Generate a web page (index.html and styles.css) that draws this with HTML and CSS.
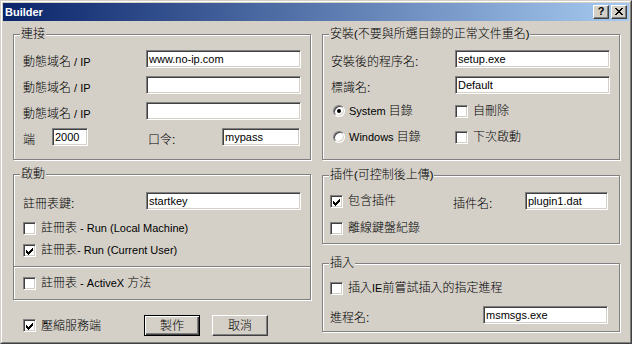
FILE: index.html
```html
<!DOCTYPE html>
<html lang="zh-Hant">
<head>
<meta charset="utf-8">
<title>Builder</title>
<link rel="stylesheet" href="styles.css">
</head>
<body>
<div class="window">
  <div class="frame">
    <div class="titlebar">
      <span class="title-text">Builder</span>
      <div class="cbtns">
        <span class="cbtn"><span class="qmark">?</span></span>
        <span class="cbtn">
          <svg width="8" height="7" viewBox="0 0 8 7" shape-rendering="crispEdges"><path d="M0 0h2v1H0z M6 0h2v1H6z M1 1h2v1H1z M5 1h2v1H5z M2 2h4v1H2z M3 3h2v1H3z M2 4h4v1H2z M1 5h2v1H1z M5 5h2v1H5z M0 6h2v1H0z M6 6h2v1H6z" fill="#000"/></svg>
        </span>
      </div>
    </div>
    <div class="client">
      <div class="col">
        <div class="group h126">
          <span class="legend">連接</span>
          <div class="fgrid g-connect">
            <span class="lbl">動態域名<span class="l"> / IP</span></span>
            <div class="edit">www.no-ip.com</div>
            <span class="lbl">動態域名<span class="l"> / IP</span></span>
            <div class="edit"></div>
            <span class="lbl">動態域名<span class="l"> / IP</span></span>
            <div class="edit"></div>
            <div class="row4">
              <span class="lbl lbl-port">端</span>
              <div class="edit e-port">2000</div>
              <span class="lbl lbl-pass">口令:</span>
              <div class="edit e-pass">mypass</div>
            </div>
          </div>
        </div>

        <div class="group h126 mt14">
          <span class="legend">啟動</span>
          <div class="sec-top">
            <div class="fgrid g-start">
              <span class="lbl">註冊表鍵:</span>
              <div class="edit">startkey</div>
            </div>
            <div class="opt mt11">
              <span class="cb"></span>
              <span>註冊表<span class="l"> - Run (Local Machine)</span></span>
            </div>
            <div class="opt mt8">
              <span class="cb"><svg width="11" height="11" viewBox="-1 -1 11 11" shape-rendering="crispEdges"><path d="M1 4h1v3H1z M2 5h1v3H2z M3 6h1v3H3z M4 5h1v3H4z M5 4h1v3H5z M6 3h1v3H6z M7 2h1v3H7z" fill="#000"/></svg></span>
              <span>註冊表<span class="l">- Run (Current User)</span></span>
            </div>
          </div>
          <div class="sep"></div>
          <div class="sec-bottom">
            <div class="opt">
              <span class="cb"></span>
              <span>註冊表<span class="l"> - ActiveX </span>方法</span>
            </div>
          </div>
        </div>

        <div class="bottom">
          <div class="opt compress">
            <span class="cb"><svg width="11" height="11" viewBox="-1 -1 11 11" shape-rendering="crispEdges"><path d="M1 4h1v3H1z M2 5h1v3H2z M3 6h1v3H3z M4 5h1v3H4z M5 4h1v3H5z M6 3h1v3H6z M7 2h1v3H7z" fill="#000"/></svg></span>
            <span>壓縮服務端</span>
          </div>
          <div class="btn default">製作</div>
          <div class="btn">取消</div>
        </div>
      </div>

      <div class="col">
        <div class="group h126">
          <span class="legend">安裝<span class="l">(</span>不要與所選目錄的正常文件重名<span class="l">)</span></span>
          <div class="fgrid g-install">
            <span class="lbl">安裝後的程序名:</span>
            <div class="edit">setup.exe</div>
            <span class="lbl">標識名:</span>
            <div class="edit">Default</div>
            <div class="opt tall r">
              <span class="radio on"></span>
              <span><span class="l">System </span>目錄</span>
            </div>
            <div class="opt tall">
              <span class="cb"></span>
              <span>自刪除</span>
            </div>
            <div class="opt tall r">
              <span class="radio"></span>
              <span><span class="l">Windows </span>目錄</span>
            </div>
            <div class="opt tall">
              <span class="cb"></span>
              <span>下次啟動</span>
            </div>
          </div>
        </div>

        <div class="group h69 mt15">
          <span class="legend">插件<span class="l">(</span>可控制後上傳<span class="l">)</span></span>
          <div class="inner g-plugin">
            <div class="prow">
              <div class="opt w-plug">
                <span class="cb"><svg width="11" height="11" viewBox="-1 -1 11 11" shape-rendering="crispEdges"><path d="M1 4h1v3H1z M2 5h1v3H2z M3 6h1v3H3z M4 5h1v3H4z M5 4h1v3H5z M6 3h1v3H6z M7 2h1v3H7z" fill="#000"/></svg></span>
                <span>包含插件</span>
              </div>
              <span class="lbl lbl-pn">插件名:</span>
              <div class="edit e-pn">plugin1.dat</div>
            </div>
            <div class="opt mt11">
              <span class="cb"></span>
              <span>離線鍵盤紀錄</span>
            </div>
          </div>
        </div>

        <div class="group h69 mt19">
          <span class="legend">插入</span>
          <div class="inner g-inject">
            <div class="opt">
              <span class="cb"></span>
              <span>插入<span class="l">IE</span>前嘗試插入的指定進程</span>
            </div>
            <div class="prow mt11">
              <span class="lbl lbl-proc">進程名:</span>
              <div class="edit e-proc">msmsgs.exe</div>
            </div>
          </div>
        </div>
      </div>
    </div>
  </div>
</div>
</body>
</html>
```

FILE: styles.css
```css
body {
  margin: 0;
  background: #d4d0c8;
  font-family: "Liberation Sans", "Noto Sans CJK TC", sans-serif;
  font-size: 12px;
  font-weight: 300;
  color: #000;
}

.l { font-size: 11px; font-weight: 400; }

.window {
  width: 632px;
  height: 344px;
  box-sizing: border-box;
  background: #d4d0c8;
  border: 1px solid;
  border-color: #d4d0c8 #404040 #404040 #d4d0c8;
}

.frame {
  height: 100%;
  box-sizing: border-box;
  border: 1px solid;
  border-color: #fff #808080 #808080 #fff;
  padding: 1px;
}

.titlebar {
  height: 18px;
  display: flex;
  align-items: center;
  padding: 0 2px;
  background: linear-gradient(to right, #0a246a, #a6caf0);
}

.title-text {
  flex: 1;
  color: #fff;
  font-weight: bold;
  font-size: 11px;
  line-height: 14px;
}

.cbtns { display: flex; gap: 2px; }

.cbtn {
  width: 16px;
  height: 14px;
  box-sizing: border-box;
  background: #d4d0c8;
  border: 1px solid;
  border-color: #fff #404040 #404040 #fff;
  box-shadow: inset -1px -1px 0 #808080;
  display: flex;
  align-items: center;
  justify-content: center;
}

.cbtn svg { display: block; margin-top: -1px; }

.qmark {
  font-weight: bold;
  font-size: 11px;
  line-height: 11px;
  margin-top: -1px;
}

.client {
  display: flex;
  gap: 11px;
  padding: 13px 0 0 10px;
}

.col {
  width: 298px;
  display: flex;
  flex-direction: column;
}

.group {
  position: relative;
  box-sizing: border-box;
  border: 1px solid #808080;
  box-shadow: inset 1px 1px 0 #fff, 1px 1px 0 #fff;
}

.h126 { height: 126px; }
.h69 { height: 69px; }
.mt14 { margin-top: 14px; }
.mt15 { margin-top: 15px; }
.mt19 { margin-top: 19px; }
.mt11 { margin-top: 11px; }
.mt8 { margin-top: 8px; }

.legend {
  position: absolute;
  left: 6px;
  top: -8px;
  padding: 0 1px;
  background: #d4d0c8;
  line-height: 14px;
  white-space: nowrap;
}

.fgrid {
  display: grid;
  row-gap: 8px;
  align-items: start;
}

.g-connect {
  grid-template-columns: 123px 155px;
  padding: 15px 0 0 9px;
}

.g-install {
  grid-template-columns: 124px 155px;
  padding: 15px 0 0 8px;
}

.g-start { grid-template-columns: 123px 155px; }

.lbl {
  height: 18px;
  box-sizing: border-box;
  padding-top: 5px;
  line-height: 14px;
  white-space: nowrap;
  flex: none;
}

.edit {
  height: 18px;
  box-sizing: border-box;
  background: #fff;
  border: 1px solid;
  border-color: #808080 #fff #fff #808080;
  box-shadow: inset 1px 1px 0 #404040, inset -1px -1px 0 #d4d0c8;
  padding-left: 2px;
  font-size: 11px;
  font-weight: 400;
  line-height: 16px;
  white-space: nowrap;
  overflow: hidden;
  flex: none;
}

.row4 {
  grid-column: 1 / -1;
  display: flex;
}

.lbl-port { width: 29px; }
.e-port { width: 36px; }
.lbl-pass { width: 74px; margin-left: 60px; }
.e-pass { width: 78px; }

.opt {
  display: flex;
  align-items: center;
  gap: 5px;
  height: 14px;
  line-height: 14px;
  white-space: nowrap;
}

.opt.tall { height: 18px; }
.opt.r { gap: 4px; margin-left: 2px; }

.cb {
  width: 13px;
  height: 13px;
  flex: none;
  box-sizing: border-box;
  background: #fff;
  border: 1px solid;
  border-color: #808080 #fff #fff #808080;
  box-shadow: inset 1px 1px 0 #404040, inset -1px -1px 0 #d4d0c8;
}

.cb svg { display: block; }

.radio {
  position: relative;
  width: 12px;
  height: 12px;
  flex: none;
  box-sizing: border-box;
  border-radius: 50%;
  background: #fff;
  border: 1px solid;
  border-color: #808080 #fff #fff #808080;
  box-shadow: inset 1px 1px 0 #404040, inset -1px -1px 0 #d4d0c8;
}

.radio.on::after {
  content: "";
  position: absolute;
  left: 3px;
  top: 3px;
  width: 4px;
  height: 4px;
  border-radius: 50%;
  background: #000;
}

.sec-top { padding: 17px 0 9px 9px; }

.sep {
  border-top: 1px solid #808080;
  border-bottom: 1px solid #fff;
}

.sec-bottom { padding: 8px 0 0 9px; }

.bottom {
  display: flex;
  align-items: center;
  height: 21px;
  margin-top: 15px;
  padding-left: 10px;
}

.compress { width: 121px; flex: none; }

.btn {
  width: 56px;
  height: 21px;
  flex: none;
  box-sizing: border-box;
  background: #d4d0c8;
  border: 1px solid;
  border-color: #fff #404040 #404040 #fff;
  box-shadow: inset -1px -1px 0 #808080;
  display: flex;
  align-items: center;
  justify-content: center;
  line-height: 14px;
}

.btn.default {
  border-color: #000;
  box-shadow: inset 1px 1px 0 #fff, inset -1px -1px 0 #404040, inset -2px -2px 0 #808080;
}

.btn + .btn { margin-left: 12px; }

.g-plugin { padding: 16px 0 0 7px; }
.g-inject { padding: 17px 0 0 7px; }

.prow {
  display: flex;
  align-items: center;
  height: 18px;
}

.w-plug { width: 123px; flex: none; }
.lbl-pn { width: 72px; }
.e-pn { width: 83px; }
.lbl-proc { width: 153px; }
.e-proc { width: 125px; }
```
